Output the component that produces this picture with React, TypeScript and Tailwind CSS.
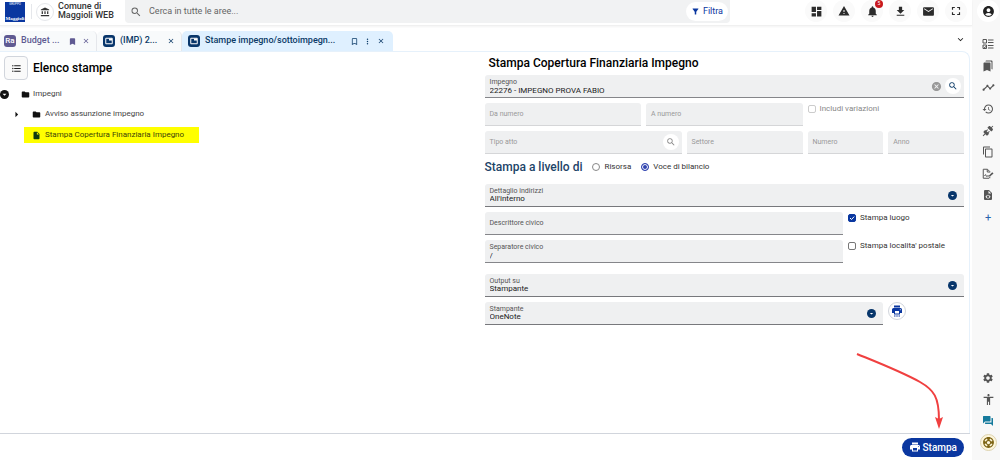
import { useId, useState } from "react";
import type { ReactNode } from "react";
import {
  MdAccessibility,
  MdAccountBalance,
  MdAccountCircle,
  MdArrowRight,
  MdBookmark,
  MdBookmarkBorder,
  MdBookmarks,
  MdCancel,
  MdClose,
  MdContentCopy,
  MdDashboard,
  MdDownload,
  MdExpandMore,
  MdFilterAlt,
  MdFolder,
  MdFormatListBulleted,
  MdForum,
  MdFullscreen,
  MdHistory,
  MdInsertDriveFile,
  MdMail,
  MdMoreVert,
  MdNotifications,
  MdPrint,
  MdSearch,
  MdSettings,
  MdSupport,
  MdTimeline,
  MdWarning,
} from "react-icons/md";

function ChecklistIcon() {
  return (
    <svg viewBox="0 0 24 24" width={12} height={12} fill="none" stroke="currentColor" strokeWidth={2}>
      <path d="M2 3h7v7H2zM2 14h7v7H2zM3.500 17.500l2 2 4-4.500M12 4h11M12 9h11M12 15h11M12 20h11" />
    </svg>
  );
}

function ConnectionIcon() {
  return (
    <svg viewBox="0 0 24 24" width={12} height={12} fill="currentColor">
      <path d="M21.400 7.500c.8.8.8 2.100 0 2.800l-2.800 2.800-7.800-7.800 2.800-2.800c.8-.8 2.100-.8 2.800 0l1.800 1.800 3-3 1.400 1.400-3 3 1.800 1.800M15.600 13.300l-1.400-1.400-2.800 2.800-2.100-2.100 2.800-2.800-1.400-1.400-2.800 2.800-1.500-1.400-2.800 2.800c-.8.8-.8 2.100 0 2.800l1.800 1.800-4 4 1.400 1.400 4-4 1.800 1.800c.8.8 2.100.8 2.800 0l2.800-2.800-1.400-1.400 2.800-2.900z" />
    </svg>
  );
}

function FileSignIcon() {
  return (
    <svg viewBox="0 0 24 24" width={12} height={12} fill="none" stroke="currentColor" strokeWidth={2}>
      <path d="M14 20.500H2.500v-18H11l4.500 4.500v2M10.500 3v5H15M15.500 17v3.500M5 16c2-4 3-3 3-1s1 2 2 1h4" />
      <path d="M13.500 15.500l7-7 2.500 2.500-7 6z" fill="currentColor" stroke="none" />
    </svg>
  );
}

function FileCodeIcon() {
  return (
    <svg viewBox="0 0 24 24" width={12} height={12} fill="currentColor">
      <path
        fillRule="evenodd"
        d="M6 2h8l6 6v12a2 2 0 0 1-2 2H6a2 2 0 0 1-2-2V4a2 2 0 0 1 2-2zM13 3.500V9h5.500zM10.500 11.500L6.800 15.500l3.700 4 1.200-1.200-2.500-2.800 2.500-2.800zM13.500 11.500l-1.200 1.200 2.500 2.800-2.500 2.800 1.200 1.200 3.700-4z"
      />
    </svg>
  );
}

function PrinterSetupIcon() {
  return (
    <svg viewBox="0 0 24 24" width={12} height={12} fill="currentColor">
      <path
        fillRule="evenodd"
        d="M6 1h12v4H6zM5 6h14a3 3 0 0 1 3 3v7h-4v3H6v-3H2V9a3 3 0 0 1 3-3zM8 12v5h8v-5zM18.500 8.500a1 1 0 1 0 .1 0z"
      />
      <path d="M6 21h3v2H6zM10.500 21h3v2h-3zM15 21h3v2h-3z" />
    </svg>
  );
}

function WindowIcon() {
  return (
    <span className="flex size-3 shrink-0 items-center justify-center rounded-[3px] bg-[#08366b] text-white">
      <svg viewBox="0 0 16 16" width={8} height={8} fill="none" stroke="currentColor" strokeWidth={2}>
        <path d="M1.500 2.500h13v11h-13z" />
        <path d="M8 3h6v4H8z" fill="currentColor" stroke="none" />
      </svg>
    </span>
  );
}

function CaretBadge() {
  return (
    <svg viewBox="0 0 16 16" width={9} height={9} className="shrink-0">
      <circle cx="8" cy="8" r="8" fill="#08366b" />
      <path d="M5 7h6L8 9.800z" fill="#fff" />
    </svg>
  );
}

const headerActions = [
  { label: "Dashboard", icon: <MdDashboard size={13} /> },
  { label: "Avvisi", icon: <MdWarning size={12} /> },
  { label: "Notifiche", icon: <MdNotifications size={13} />, badge: "5" },
  { label: "Download", icon: <MdDownload size={13} /> },
  { label: "Posta", icon: <MdMail size={13} /> },
  { label: "Schermo intero", icon: <MdFullscreen size={14} /> },
];

function Header() {
  return (
    <header className="flex h-[26px] items-start border-b border-[#f0f0f0] pl-[5px] pr-[5px] shadow-[0_1px_2px_rgba(0,0,0,0.05)]">
      <div className="mt-0.5 flex size-5 shrink-0 flex-col items-center justify-between overflow-hidden bg-[#0a37a0] text-white">
        <span className="text-[3px] leading-[5px]">GRUPPO</span>
        <span className="font-['Liberation_Serif',serif] text-[5px] font-bold leading-[7px]">Maggioli</span>
      </div>
      <span className="ml-1.5 mt-1 h-[15px] w-px bg-gray-200" />
      <span className="ml-1 mt-[3px] flex size-[18px] shrink-0 items-center justify-center rounded-full border border-gray-200 text-[#333]">
        <MdAccountBalance size={10} />
      </span>
      <p className="ml-1 mt-[2px] w-[67px] whitespace-nowrap text-[9px] font-medium leading-[9px] text-[#333]">
        Comune di
        <br />
        Maggioli WEB
      </p>
      <form className="flex h-[23px] min-w-0 flex-1 items-center rounded-b-[4px] bg-[#f1f2f3] pl-[5px] pr-0.5 text-[#666]" onSubmit={(e) => e.preventDefault()}>
        <MdSearch size={12} className="shrink-0" />
        <input
          type="search"
          aria-label="Cerca"
          placeholder="Cerca in tutte le aree..."
          className="ml-[7px] min-w-0 flex-1 bg-transparent text-[9px] outline-none placeholder:text-[#666]"
        />
        <button type="button" className="flex h-[19px] items-center gap-[3px] rounded-full bg-white px-[5px] text-[9px] text-[#0a37a0]">
          <MdFilterAlt size={9} />
          Filtra
        </button>
      </form>
      <nav className="ml-[75px] flex gap-1.5">
        {headerActions.map((a) => (
          <button
            key={a.label}
            type="button"
            aria-label={a.label}
            className="relative flex size-[22px] items-center justify-center rounded-full bg-[#fafafa] text-[#2b2b2b]"
          >
            {a.icon}
            {a.badge && (
              <span className="absolute right-0 top-0 flex size-2 items-center justify-center rounded-full bg-[#c8191e] text-[5px] text-white">
                {a.badge}
              </span>
            )}
          </button>
        ))}
      </nav>
    </header>
  );
}

function Tabs() {
  return (
    <div className="mt-[5px] flex h-5 items-stretch text-[9px] font-medium text-[#0b3a67]">
      <div className="flex w-[97px] items-center rounded-t-[5px] border-r border-gray-200 bg-[#f8fafb] pl-1 pr-1.5 text-[#5f5a92]">
        <span className="flex size-3 shrink-0 items-center justify-center rounded-[3px] bg-[#5f5a92] text-[8px] leading-none text-white">
          Ra
        </span>
        <button type="button" className="ml-[5px] flex-1 text-left">Budget ...</button>
        <MdBookmark size={9} className="mr-[5px]" />
        <button type="button" aria-label="Chiudi Budget"><MdClose size={8} /></button>
      </div>
      <div className="flex w-[85px] items-center rounded-t-[5px] border-r border-gray-200 bg-[#f8fafb] pl-1.5 pr-1.5">
        <WindowIcon />
        <button type="button" className="ml-[5px] flex-1 text-left">(IMP) 2...</button>
        <button type="button" aria-label="Chiudi IMP"><MdClose size={8} /></button>
      </div>
      <div className="flex w-[211px] items-center rounded-t-[5px] bg-[#dff0ff] pl-1.5 pr-2">
        <WindowIcon />
        <button type="button" className="ml-[5px] flex-1 whitespace-nowrap text-left">Stampe impegno/sottoimpegn...</button>
        <button type="button" aria-label="Segnalibro"><MdBookmarkBorder size={9} /></button>
        <button type="button" aria-label="Altro" className="ml-1"><MdMoreVert size={9} /></button>
        <button type="button" aria-label="Chiudi stampe" className="ml-[5px]"><MdClose size={8} /></button>
      </div>
      <button type="button" aria-label="Altre schede" className="mb-1 ml-auto mr-1.5 text-[#222]">
        <MdExpandMore size={11} />
      </button>
    </div>
  );
}

function ReportTree() {
  return (
    <section className="w-1/2 pt-1">
      <div className="flex items-center gap-[5px] pl-1">
        <button
          type="button"
          aria-label="Elenco"
          className="flex size-6 items-center justify-center rounded-[4px] border border-gray-300 bg-[#fafafa] text-[#222]"
        >
          <MdFormatListBulleted size={11} />
        </button>
        <h2 className="text-[12px] font-medium text-black">Elenco stampe</h2>
      </div>
      <ul className="mt-1 text-[8px] text-[#444]">
        <li className="flex h-5 items-center">
          <svg viewBox="0 0 16 16" width={9} height={9}>
            <circle cx="8" cy="8" r="8" fill="#111" />
            <path d="M4.500 6.800h7L8 10z" fill="#fff" />
          </svg>
          <MdFolder size={9} className="ml-3 mr-[3px] text-[#111]" />
          Impegni
        </li>
        <li className="flex h-5 items-center">
          <MdArrowRight size={13} className="ml-2.5 text-[#111]" />
          <MdFolder size={9} className="ml-[9px] mr-1 text-[#111]" />
          Avviso assunzione impegno
        </li>
        <li className="mt-[3px] flex h-4 items-center">
          <a href="#stampa" className="ml-6 flex h-4 w-[175px] items-center bg-[#ffff00] pl-2 text-[#3d4408]">
            <MdInsertDriveFile size={9} className="mr-1 text-[#0d3a10]" />
            Stampa Copertura Finanziaria Impegno
          </a>
        </li>
      </ul>
    </section>
  );
}

type FieldProps = {
  label: string;
  value?: string;
  disabled?: boolean;
  className?: string;
  children?: ReactNode;
};

function Field({ label, value, disabled, className = "", children }: FieldProps) {
  const id = useId();
  const tone = disabled ? "border-[#d5d6d8] text-[#999]" : "border-[#85868a] text-[#555]";
  return (
    <div className={`flex h-[23px] min-w-0 items-center rounded-t-[3px] border-b bg-[#eff0f1] px-[5px] ${tone} ${className}`}>
      {value ? (
        <div className="flex min-w-0 flex-1 flex-col">
          <label htmlFor={id} className="text-[7px] leading-[8px]">{label}</label>
          <input id={id} defaultValue={value} className="h-2 w-full bg-transparent text-[8px] leading-[8px] text-[#222] outline-none" />
        </div>
      ) : (
        <>
          <label htmlFor={id} className="whitespace-nowrap text-[7px]">{label}</label>
          <input id={id} disabled={disabled} className="h-3 min-w-0 flex-1 bg-transparent text-[8px] outline-none" />
        </>
      )}
      {children}
    </div>
  );
}

function SelectField({ label, value, className = "" }: { label: string; value: string; className?: string }) {
  const id = useId();
  return (
    <div className={`flex h-[23px] items-center rounded-t-[3px] border-b border-[#77787c] bg-[#eff0f1] pl-[5px] pr-[7px] ${className}`}>
      <div className="flex min-w-0 flex-1 flex-col">
        <label htmlFor={id} className="text-[7px] leading-[8px] text-[#555]">{label}</label>
        <select id={id} className="h-2 w-full appearance-none bg-transparent text-[8px] leading-[8px] text-[#222] outline-none">
          <option>{value}</option>
        </select>
      </div>
      <CaretBadge />
    </div>
  );
}

function Check({ label, checked, disabled }: { label: string; checked?: boolean; disabled?: boolean }) {
  const [on, setOn] = useState(!!checked);
  return (
    <label className={`flex h-3 items-center gap-1 whitespace-nowrap text-[8px] ${disabled ? "text-[#888]" : "text-[#333]"}`}>
      <span className="relative flex size-2">
        <input
          type="checkbox"
          checked={on}
          disabled={disabled}
          onChange={(e) => setOn(e.target.checked)}
          className="size-2 appearance-none rounded-[2px] border border-[#777] bg-white checked:border-[#0a37a0] checked:bg-[#0a37a0] disabled:border-[#ccc]"
        />
        {on && (
          <svg viewBox="0 0 8 8" className="pointer-events-none absolute inset-0 size-2" fill="none" stroke="#fff">
            <path d="M2 4l1.500 1.500L6.200 2.600" />
          </svg>
        )}
      </span>
      {label}
    </label>
  );
}

function PrintForm() {
  const [level, setLevel] = useState("Voce di bilancio");
  return (
    <section className="w-1/2 pr-[5px] pt-1">
      <h2 className="h-[19px] pl-1 text-[12px] font-medium leading-[15px] text-black">
        Stampa Copertura Finanziaria Impegno
      </h2>
      <div className="flex flex-col gap-[5px]">
        <Field label="Impegno" value="22276 - IMPEGNO PROVA FABIO">
          <button type="button" aria-label="Cancella" className="text-[#999]"><MdCancel size={11} /></button>
          <button type="button" aria-label="Cerca impegno" className="-mr-0.5 ml-[3px] flex size-4 items-center justify-center rounded-full bg-white text-[#0b3a67]">
            <MdSearch size={10} />
          </button>
        </Field>
        <div className="flex gap-[5px]">
          <div className="grid w-[318px] grid-cols-2 gap-[5px]">
            <Field label="Da numero" disabled />
            <Field label="A numero" disabled />
          </div>
          <Check label="Includi variazioni" disabled />
        </div>
        <div className="flex gap-[5px]">
          <Field label="Tipo atto" disabled className="w-[197px]">
            <button type="button" aria-label="Cerca tipo atto" className="-mr-0.5 flex size-4 items-center justify-center rounded-full bg-white text-[#888]">
              <MdSearch size={10} />
            </button>
          </Field>
          <Field label="Settore" disabled className="w-[116px]" />
          <Field label="Numero" disabled className="flex-1" />
          <Field label="Anno" disabled className="flex-1" />
        </div>
      </div>
      <div role="radiogroup" aria-labelledby="livello-title" className="flex h-[30px] items-center pb-1 text-[8px] text-[#333]">
        <h3 id="livello-title" className="mr-2.5 text-[12px] font-medium text-[#1d4468]">Stampa a livello di</h3>
        {["Risorsa", "Voce di bilancio"].map((name) => (
          <label key={name} className="mr-2.5 flex items-center gap-1">
            <input
              type="radio"
              name="livello"
              checked={level === name}
              onChange={() => setLevel(name)}
              className="size-2 appearance-none rounded-full border border-[#888] checked:border-[#2f43b0] checked:bg-[#2f43b0] checked:shadow-[inset_0_0_0_1px_#fff]"
            />
            {name}
          </label>
        ))}
      </div>
      <div className="flex flex-col gap-[5px]">
        <SelectField label="Dettaglio indirizzi" value="All'interno" />
        <div className="flex gap-[5px]">
          <Field label="Descrittore civico" className="flex-1" />
          <div className="w-[116px]"><Check label="Stampa luogo" checked /></div>
        </div>
        <div className="flex gap-[5px]">
          <Field label="Separatore civico" value="/" className="flex-1" />
          <div className="w-[116px]"><Check label="Stampa localita' postale" /></div>
        </div>
      </div>
      <div className="mt-[11px] flex flex-col gap-[5px]">
        <SelectField label="Output su" value="Stampante" />
        <div className="flex gap-[5px]">
          <SelectField label="Stampante" value="OneNote" className="flex-1" />
          <div className="w-[76px]">
            <button
              type="button"
              aria-label="Imposta stampante"
              className="flex size-[18px] items-center justify-center rounded-full border border-gray-300 text-[#0a37a0]"
            >
              <PrinterSetupIcon />
            </button>
          </div>
        </div>
      </div>
    </section>
  );
}

const sideTools = [
  { label: "Attività", icon: <ChecklistIcon /> },
  { label: "Segnalibri", icon: <MdBookmarks size={12} /> },
  { label: "Andamento", icon: <MdTimeline size={13} /> },
  { label: "Cronologia", icon: <MdHistory size={12} /> },
  { label: "Connessioni", icon: <ConnectionIcon /> },
  { label: "Copia", icon: <MdContentCopy size={12} /> },
  { label: "Firma", icon: <FileSignIcon /> },
  { label: "Codice", icon: <FileCodeIcon /> },
];

function SideBar() {
  return (
    <aside className="flex w-7 shrink-0 flex-col items-center bg-[#f8f8f8] pl-1 text-[#555]">
      <button type="button" aria-label="Profilo" className="flex size-[22px] items-center justify-center rounded-full bg-white text-[#222]">
        <MdAccountCircle size={13} />
      </button>
      <nav className="mt-3 flex h-[193px] flex-col justify-between">
        {sideTools.map((t) => (
          <button key={t.label} type="button" aria-label={t.label} className="flex size-5 items-center justify-center">
            {t.icon}
          </button>
        ))}
        <button type="button" aria-label="Aggiungi" className="size-5 text-[11px] leading-none text-[#2a62ad]">+</button>
      </nav>
      <nav className="mb-[7px] mt-auto flex h-[85px] flex-col justify-between">
        <button type="button" aria-label="Impostazioni" className="flex size-5 items-center justify-center"><MdSettings size={12} /></button>
        <button type="button" aria-label="Accessibilità" className="flex size-5 items-center justify-center"><MdAccessibility size={13} /></button>
        <button type="button" aria-label="Chat" className="flex size-5 items-center justify-center text-[#157a9c]"><MdForum size={12} /></button>
        <button type="button" aria-label="Supporto" className="flex size-5 items-center justify-center">
          <span className="flex size-[17px] shrink-0 items-center justify-center rounded-full border border-[#ddd3b0] bg-[#fdf6dc] text-[#7d6414]">
            <MdSupport size={13} />
          </span>
        </button>
      </nav>
    </aside>
  );
}

export default function App() {
  return (
    <div className="flex min-h-screen bg-white font-[Roboto,'Liberation_Sans',sans-serif]">
      <div className="relative flex min-w-0 flex-1 flex-col">
        <Header />
        <Tabs />
        <main className="mr-0.5 flex flex-1 rounded-tr-[8px] border-r border-t border-[#e6f1fb]">
          <ReportTree />
          <PrintForm />
        </main>
        <footer className="mr-0.5 flex h-[27px] items-center justify-end border-t border-gray-300 pr-1.5">
          <button type="button" className="flex h-[19px] items-center gap-0.5 rounded-full bg-[#0a37a0] px-[7px] text-[10px] font-medium text-white">
            <MdPrint size={12} />
            Stampa
          </button>
        </footer>
        <svg viewBox="0 0 92 80" width={92} height={80} className="pointer-events-none absolute bottom-[29px] right-[26px]" fill="none">
          <path d="M3 3C30 14 48 21 66 31C80 39 85 46 85 69" stroke="#f04040" strokeWidth={2} />
          <path d="M81 66l4 2 4-2-4 12z" fill="#f04040" />
        </svg>
      </div>
      <SideBar />
    </div>
  );
}
